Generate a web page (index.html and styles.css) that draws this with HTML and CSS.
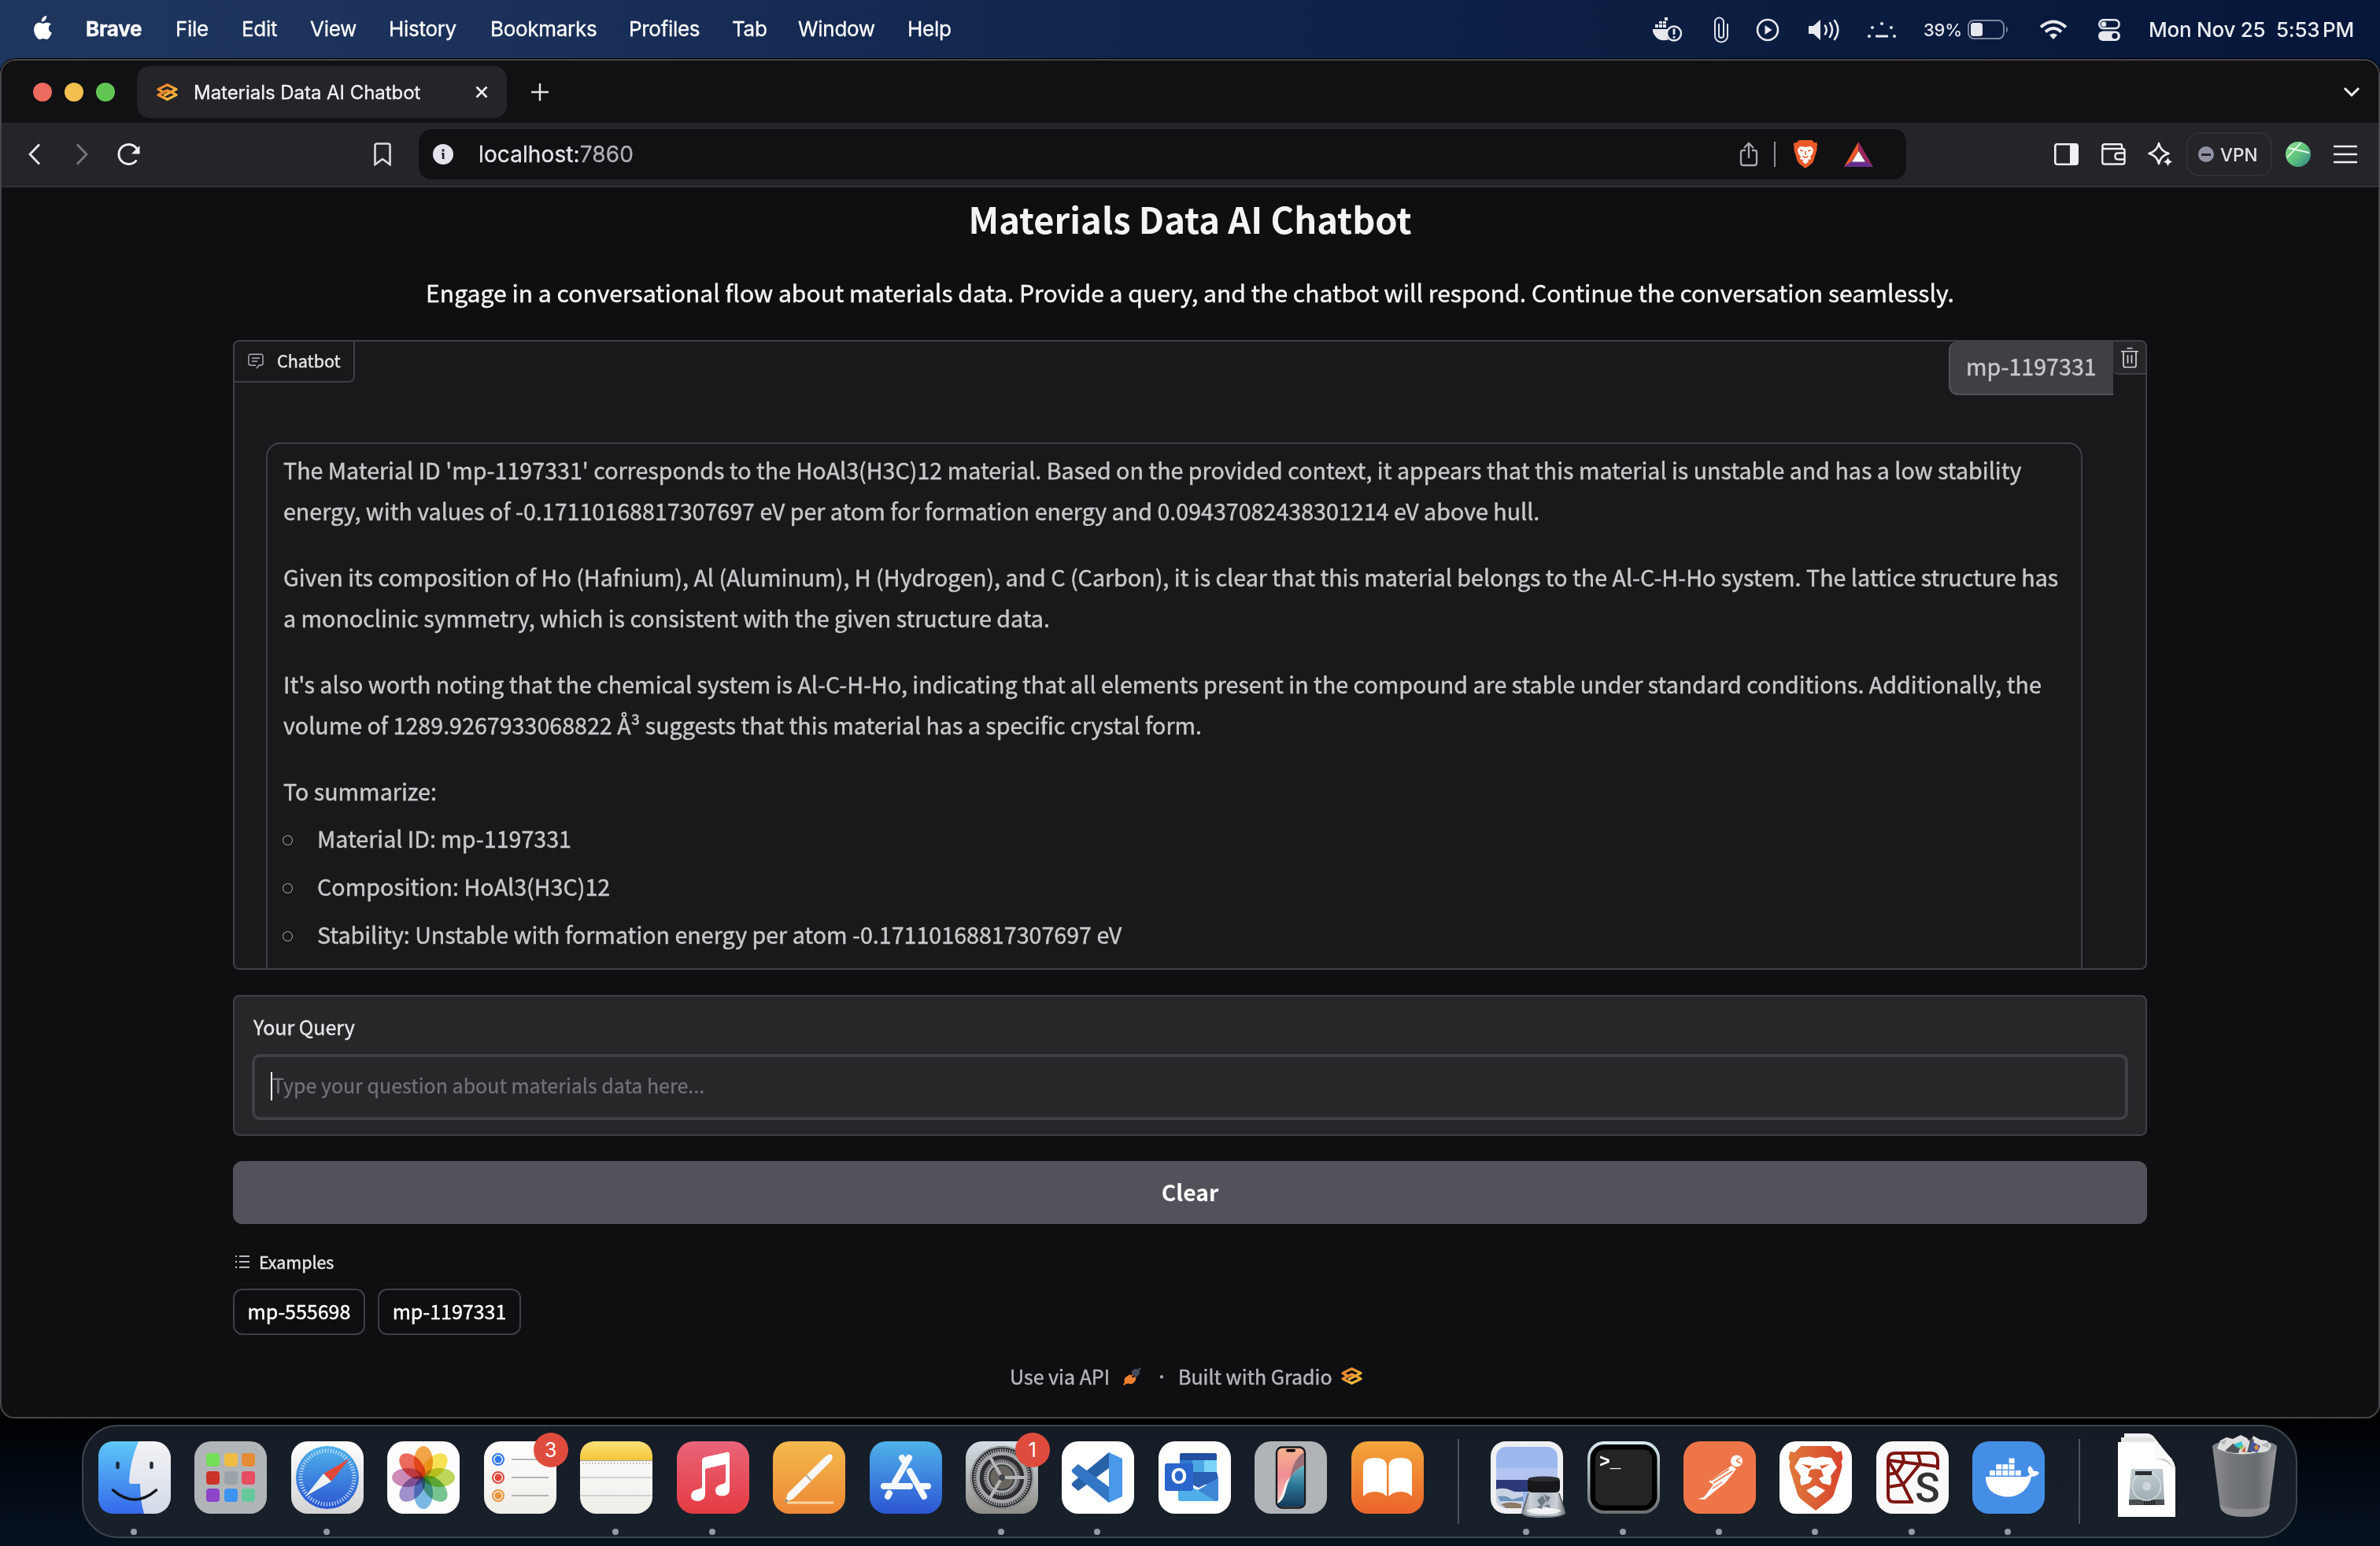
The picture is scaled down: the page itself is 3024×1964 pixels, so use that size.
FILE: index.html
```html
<!DOCTYPE html>
<html lang="en">
<head>
<meta charset="utf-8">
<title>Materials Data AI Chatbot</title>
<link rel="stylesheet" href="styles.css">
</head>
<body>
<svg width="0" height="0" class="defs" aria-hidden="true">
  <defs>
    <linearGradient id="gOrange" x1="0" y1="0" x2="1" y2="1"><stop offset="0" stop-color="#e8772e"/><stop offset=".5" stop-color="#f0a033"/><stop offset="1" stop-color="#f4cf45"/></linearGradient>
    <linearGradient id="gFinder" x1="0" y1="0" x2="0" y2="1"><stop offset="0" stop-color="#5fc8f8"/><stop offset="1" stop-color="#3568ea"/></linearGradient>
    <linearGradient id="gFace" x1="0" y1="0" x2="0" y2="1"><stop offset="0" stop-color="#f3f3f5"/><stop offset="1" stop-color="#d3dbe8"/></linearGradient>
    <linearGradient id="gWhite" x1="0" y1="0" x2="0" y2="1"><stop offset="0" stop-color="#ffffff"/><stop offset="1" stop-color="#d3d3d3"/></linearGradient>
    <linearGradient id="gBlue" x1="0" y1="0" x2="0" y2="1"><stop offset="0" stop-color="#4fb3ea"/><stop offset="1" stop-color="#2c55d2"/></linearGradient>
    <linearGradient id="gMusic" x1="0" y1="0" x2="0" y2="1"><stop offset="0" stop-color="#ea6478"/><stop offset="1" stop-color="#e43b42"/></linearGradient>
    <linearGradient id="gPages" x1="0" y1="0" x2="0" y2="1"><stop offset="0" stop-color="#f4b94c"/><stop offset="1" stop-color="#ec8836"/></linearGradient>
    <linearGradient id="gBooks" x1="0" y1="0" x2="0" y2="1"><stop offset="0" stop-color="#f2a63a"/><stop offset="1" stop-color="#ec632b"/></linearGradient>
    <linearGradient id="gSet" x1="0" y1="0" x2="0" y2="1"><stop offset="0" stop-color="#d5dfe6"/><stop offset="1" stop-color="#8f8d88"/></linearGradient>
    <linearGradient id="gNote" x1="0" y1="0" x2="0" y2="1"><stop offset="0" stop-color="#fbe27a"/><stop offset="1" stop-color="#f6c538"/></linearGradient>
    <linearGradient id="gPaper" x1="0" y1="0" x2="0" y2="1"><stop offset="0" stop-color="#ffffff"/><stop offset="1" stop-color="#efede8"/></linearGradient>
    <linearGradient id="gLion" x1="0" y1="0" x2="1" y2="0"><stop offset="0" stop-color="#df7a3c"/><stop offset="1" stop-color="#d8432c"/></linearGradient>
    <linearGradient id="gPhone" x1="0" y1="0" x2="0" y2="1"><stop offset="0" stop-color="#f6b48f"/><stop offset=".45" stop-color="#f08e93"/><stop offset="1" stop-color="#f7c9c4"/></linearGradient>
    <linearGradient id="gSea" x1="0" y1="0" x2="0" y2="1"><stop offset="0" stop-color="#6cb8c4"/><stop offset=".5" stop-color="#2b7594"/><stop offset="1" stop-color="#123a5c"/></linearGradient>
    <linearGradient id="gBin" x1="0" y1="0" x2="1" y2="0"><stop offset="0" stop-color="#8b8d90"/><stop offset=".3" stop-color="#74777a"/><stop offset=".7" stop-color="#6a6d70"/><stop offset="1" stop-color="#9a9c9e"/></linearGradient>
    <linearGradient id="gDisk" x1="0" y1="0" x2="0" y2="1"><stop offset="0" stop-color="#c3ced2"/><stop offset="1" stop-color="#9aa8ad"/></linearGradient>
    <linearGradient id="gTerm" x1="0" y1="0" x2="0" y2="1"><stop offset="0" stop-color="#d8eaf2"/><stop offset="1" stop-color="#6b6d70"/></linearGradient>
    <linearGradient id="gGreen" x1="0" y1="0" x2="1" y2="1"><stop offset="0" stop-color="#9be29a"/><stop offset=".5" stop-color="#5fc47a"/><stop offset="1" stop-color="#2f8090"/></linearGradient>
    <linearGradient id="gJar" x1="0" y1="0" x2="1" y2="0"><stop offset="0" stop-color="#7d8288"/><stop offset=".2" stop-color="#ccd2d8"/><stop offset=".5" stop-color="#a9b4c0"/><stop offset=".8" stop-color="#cdd2d7"/><stop offset="1" stop-color="#6c7075"/></linearGradient>
    <symbol id="gradio" viewBox="0 0 27 22"><g fill="none" stroke="url(#gOrange)" stroke-width="3.2" stroke-linejoin="round"><path d="M9 11.5 2 7.4 13.500 1.700 25 7.400 9 15.5"/><path d="M18 10.500 25 14.600 13.500 20.300 2 14.600 13.500 8.800 18 11"/></g></symbol>
    <symbol id="lion" viewBox="0 0 70 83"><path d="M16 0h38l8 8 6-2 2 10-2 4 1 6-2 8-8 26q-1 5-6 9L35 83 17 69q-5-4-6-9L3 34 1 26l1-6-2-4 2-9 6 1z"/></symbol>
  </defs>
</svg>

<header class="menubar">
  <nav class="menus">
    <svg class="apple" width="26" height="31" viewBox="0 0 26 31"><path fill="#fff" d="M18.200 0c.3 2-.6 3.900-1.700 5.200-1.200 1.400-3 2.400-4.800 2.300-.3-1.900.6-3.800 1.700-5C14.600 1.100 16.600.1 18.200 0zM24 10.600c-2 1.300-3.200 3-3.200 5.300 0 2.700 1.600 4.700 4 5.700-.6 1.800-1.500 3.500-2.600 5.100-1.100 1.600-2.300 3.300-4.100 3.300-1.700 0-2.300-1-4.300-1s-2.700 1-4.300 1.100c-1.800.1-3.100-1.700-4.200-3.300C2.200 22.700 1 16.300 3.400 12.200 4.500 10 6.700 8.700 9 8.700c1.800 0 3.400 1.200 4.500 1.200s3.100-1.400 5.300-1.200c2 .1 4 .8 5.200 1.900z"/></svg>
    <b>Brave</b><span>File</span><span>Edit</span><span>View</span><span>History</span><span>Bookmarks</span><span>Profiles</span><span>Tab</span><span>Window</span><span>Help</span>
  </nav>
  <div class="status">
    <svg width="40" height="32" viewBox="0 0 40 32" fill="#e6e8ee"><path d="M1 15h20a11 11 0 0 0 0 13.500Q10 31 5 25 0 19 1 15zM4 9h4v4H4zM9 9h4v4H9zM14 9h4v4h-4zM9 5h4v3H9zM14 5h4v3h-4zM16 0h4v4h-4z"/><circle cx="28" cy="20.500" r="9" fill="none" stroke="#e6e8ee" stroke-width="2.400"/><path d="M26.600 14.500h2.800v7.500h-2.800zM26.600 24h2.800v2.600h-2.800z"/></svg>
    <svg width="20" height="34" viewBox="0 0 20 34" fill="none" stroke="#dfe2e9" stroke-width="2"><path d="M18 9v16a8 7.500 0 0 1-16 0V7a5.500 5.500 0 0 1 11 0v17a3 3 0 0 1-6 0V9"/></svg>
    <svg width="30" height="30" viewBox="0 0 30 30"><circle cx="15" cy="15" r="13" fill="none" stroke="#e6e8ee" stroke-width="2.600"/><path fill="#e6e8ee" d="M11.500 9v12l9-6z"/></svg>
    <svg width="42" height="28" viewBox="0 0 42 28"><path fill="#e6e8ee" d="M1 9h6l9-8v26l-9-8H1z"/><g fill="none" stroke="#e6e8ee" stroke-width="2.600" stroke-linecap="round"><path d="M22 8.500q3.500 5.500 0 11M28 5q6 9 0 18M34 2q8.500 12 0 24"/></g></svg>
    <svg width="38" height="24" viewBox="0 0 38 24" fill="#e6e8ee"><circle cx="18" cy="4" r="2"/><circle cx="6" cy="9" r="2"/><circle cx="30" cy="9" r="2"/><circle cx="2" cy="20" r="2"/><circle cx="34" cy="20" r="2"/><path d="M10 18.500h16v3H10z"/></svg>
    <span class="pct">39%</span>
    <svg width="53" height="26" viewBox="0 0 53 26"><rect x="1" y="1" width="45" height="23" rx="7" fill="none" stroke="#7d879c" stroke-width="2"/><rect x="4" y="4" width="15" height="17" rx="3.500" fill="#e6e8ee"/><path fill="#7d879c" d="M49 8q4 4.500 0 9z"/></svg>
    <svg width="36" height="26" viewBox="0 0 36 26" fill="none" stroke="#e6e8ee" stroke-width="4"><path d="M2 9.500q16-14 32 0M8 15.500q10-9 20 0"/><path d="M13 19.500q5-4 10 0L18 25z" fill="#e6e8ee" stroke="none"/></svg>
    <svg width="28" height="28" viewBox="0 0 28 28"><rect x="1.300" y="1.300" width="25.400" height="10.800" rx="5.400" fill="none" stroke="#e6e8ee" stroke-width="2.500"/><circle cx="7" cy="6.700" r="3.300" fill="#e6e8ee"/><rect y="15.500" width="28" height="12.500" rx="6.200" fill="#e6e8ee"/><circle cx="21" cy="21.700" r="3.600" fill="#0a1b3c"/></svg>
    <span class="date">Mon Nov 25</span><span class="date time">5:53 PM</span>
  </div>
</header>

<main class="window">
  <div class="tabstrip">
    <i class="light red"></i><i class="light yellow"></i><i class="light green"></i>
    <div class="tab">
      <svg width="27" height="22"><use href="#gradio"/></svg>
      <span class="tab-title">Materials Data AI Chatbot</span>
      <svg class="tab-x" width="16" height="16" viewBox="0 0 16 16"><path d="M1.500 1.500l13 13M14.500 1.500l-13 13" stroke="#f0f0f2" stroke-width="2.600"/></svg>
    </div>
    <svg class="plus" width="22" height="22" viewBox="0 0 22 22"><path d="M11 0v22M0 11h22" stroke="#e4e4e7" stroke-width="2.400"/></svg>
    <svg class="chev" width="22" height="14" viewBox="0 0 22 14"><path d="M2 2l9 9 9-9" fill="none" stroke="#f0f0f2" stroke-width="3"/></svg>
  </div>

  <div class="toolbar">
    <svg width="16" height="28" viewBox="0 0 16 28"><path d="M14 1.500L2 14l12 12.500" fill="none" stroke="#e6e6ea" stroke-width="2.800"/></svg>
    <svg width="16" height="28" viewBox="0 0 16 28"><path d="M2 1.500L14 14 2 26.500" fill="none" stroke="#77777d" stroke-width="2.800"/></svg>
    <svg width="32" height="30" viewBox="0 0 32 30"><path d="M25.500 22.500a12.500 12.500 0 1 1 1-13.500" fill="none" stroke="#f0f0f2" stroke-width="2.900"/><path d="M29.500 4v10.500H19z" fill="#f0f0f2"/></svg>
    <svg width="24" height="30" viewBox="0 0 24 30"><path d="M2.500 28V4q0-2.500 2.500-2.500h14q2.500 0 2.500 2.500v24L12 21z" fill="none" stroke="#dcdce0" stroke-width="2.600"/></svg>
    <div class="omnibox">
      <svg width="26" height="26" viewBox="0 0 26 26"><circle cx="13" cy="13" r="13" fill="#e4e2ea"/><path d="M11.600 6.500h2.800v3h-2.800zM11 11.200h3.400V19h-2.500v-6H11z" fill="#17171b"/></svg>
      <span class="url">localhost:<em>7860</em></span>
      <svg class="share" width="24" height="32" viewBox="0 0 24 32" fill="none" stroke="#a9a9ae" stroke-width="2.300"><path d="M8 11H4.500Q2 11 2 13.500V27q0 3 3 3h14q3 0 3-3V13.500Q22 11 19.500 11H16M12 21V2M6 8l6-6 6 6"/></svg>
      <i class="sep"></i>
      <svg width="32" height="36" viewBox="0 0 32 36"><use href="#lion" fill="#ea5a2a" width="32" height="36"/><path fill="#fff" d="M6 12l3-4 5 .5 2 .5 2-.5 5-.5 3 4-1 5-3 4 1 3-5 1.500 2.500 1L16 30.500 11.500 26.500l2.500-1L9 24l1-3-3-4z"/><path d="M9 12.500l4 1.500M23 12.500L19 14M16 14v5M12.500 20.500L16 22.500l3.500-2" stroke="#ea5a2a" stroke-width="1.500" fill="none"/></svg>
      <svg class="bat" width="37" height="32" viewBox="0 0 37 32"><path fill="#f0562e" d="M18.500 0v12L9 26 0 32z"/><path fill="#99275f" d="M18.500 0v12L28 26l9 6z"/><path fill="#662f8d" d="M0 32l9-7h19l9 7z"/><path fill="#fff" d="M18.500 12L27 25.500H10z"/></svg>
    </div>
    <div class="tools">
      <svg width="31" height="28" viewBox="0 0 31 28"><rect x="1.300" y="1.300" width="28.400" height="25.400" rx="2.500" fill="none" stroke="#f0f0f2" stroke-width="2.600"/><path fill="#f0f0f2" d="M20 1h10v26H20z"/></svg>
      <svg width="31" height="28" viewBox="0 0 31 28" fill="none" stroke="#f0f0f2" stroke-width="2.400"><path d="M1.300 4.500V24q0 2.500 2.500 2.500H27q2.500 0 2.500-2.500V9.500Q29.500 7 27 7H4Q1.300 7 1.300 4.300T4 1.300h20q2 0 2 2V7M29 12.500H21q-3.500 0-3.500 4t3.500 4h8"/></svg>
      <svg width="32" height="32" viewBox="0 0 32 32"><path d="M14 2q2 10 12.500 13Q16 18 14 28 12 18 1.500 15 12 12 14 2z" fill="none" stroke="#f0f0f2" stroke-width="2.500" stroke-linejoin="round"/><path d="M25.500 19.500q1 5 6 6-5 1-6 6-1-5-6-6 5-1 6-6z" fill="#f0f0f2"/></svg>
      <div class="vpn"><i></i>VPN</div>
      <svg width="32" height="32" viewBox="0 0 32 32"><circle cx="16" cy="16" r="16" fill="url(#gGreen)"/><path d="M2 20L20 1M4 8l26 6" stroke="#e8f8ea" stroke-width="1.800" fill="none"/></svg>
      <svg width="30" height="24" viewBox="0 0 30 24"><path d="M0 2h30M0 12h30M0 22h30" stroke="#f0f0f2" stroke-width="2.600"/></svg>
    </div>
  </div>

  <section class="page">
    <h1>Materials Data AI Chatbot</h1>
    <p class="intro">Engage in a conversational flow about materials data. Provide a query, and the chatbot will respond. Continue the conversation seamlessly.</p>

    <div class="chat">
      <div class="chat-head">
        <div class="label">
          <svg width="20" height="20" viewBox="0 0 20 20" fill="none" stroke="#b4b4ba" stroke-width="1.400"><path d="M11 19l3-4h2.500Q19 15 19 12.500v-9Q19 1 16.500 1h-13Q1 1 1 3.500v9Q1 15 3.500 15H10M5 6h10M5 10h7"/></svg>
          <span>Chatbot</span>
        </div>
        <div class="user">mp-1197331</div>
        <div class="trash">
          <svg width="22" height="27" viewBox="0 0 22 27" fill="none" stroke="#d6d6da" stroke-width="1.700"><path d="M0 5.500h22M7.500 1.500h7M3 5.500V23q0 2.500 2.500 2.500h11Q19 25.500 19 23V5.500M8.500 10v10.500M13.500 10v10.500"/></svg>
        </div>
      </div>
      <div class="bot">
        <p>The Material ID 'mp-1197331' corresponds to the HoAl3(H3C)12 material. Based on the provided context, it appears that this material is unstable and has a low stability<br>energy, with values of -0.17110168817307697 eV per atom for formation energy and 0.09437082438301214 eV above hull.</p>
        <p>Given its composition of Ho (Hafnium), Al (Aluminum), H (Hydrogen), and C (Carbon), it is clear that this material belongs to the Al-C-H-Ho system. The lattice structure has<br>a monoclinic symmetry, which is consistent with the given structure data.</p>
        <p>It's also worth noting that the chemical system is Al-C-H-Ho, indicating that all elements present in the compound are stable under standard conditions. Additionally, the<br>volume of 1289.9267933068822 Å³ suggests that this material has a specific crystal form.</p>
        <p>To summarize:</p>
        <ul>
          <li>Material ID: mp-1197331</li>
          <li>Composition: HoAl3(H3C)12</li>
          <li>Stability: Unstable with formation energy per atom -0.17110168817307697 eV</li>
        </ul>
      </div>
    </div>

    <div class="query">
      <div class="query-label">Your Query</div>
      <div class="input"><i class="caret"></i><span>Type your question about materials data here...</span></div>
    </div>

    <div class="clear">Clear</div>

    <div class="examples">
      <svg width="20" height="18" viewBox="0 0 20 18" fill="#d4d4d8"><path d="M6 1h13v1.800H6zM6 8h13v1.800H6zM6 15h13v1.800H6zM1 1h2v1.800H1zM1 8h2v1.800H1zM1 15h2v1.800H1z"/></svg>
      <span>Examples</span>
    </div>
    <div class="chips"><span class="chip chip-a">mp-555698</span><span class="chip chip-b">mp-1197331</span></div>

    <footer class="footer">
      <span class="api">Use via API</span>
      <svg class="plug" width="23" height="23" viewBox="0 0 23 23"><path fill="#454b5c" d="M10 6l4-3.500q2.500-1.500 5 0L21.500 0 23 1.500 20.500 4q1.500 3-.5 5.500L16.500 13z"/><path fill="#ec7f34" d="M8.500 9l1.500 1.500L12 8.500 13 10l-2 2 1.500 1.500 2-2L16 13q1 2-.5 4L14 19q-3 3.500-7 1.500L3.500 21 1.500 23 0 21.500 2 19.500Q0 15 4 12z"/></svg>
      <span class="dot">·</span>
      <span class="built">Built with Gradio</span>
      <svg width="27" height="22"><use href="#gradio"/></svg>
    </footer>
  </section>
</main>

<div class="dock">
  <div class="app on"><svg viewBox="0 0 92 92"><rect width="92" height="92" rx="21" fill="url(#gFace)"/><path fill="url(#gFinder)" d="M21 0H51Q40 26 39 51q0 3 3 3h11q0 20 5 38H21Q0 92 0 71V21Q0 0 21 0z"/><path d="M24.500 28v5M67.500 28v5" stroke="#1d2a3a" stroke-width="4.500" stroke-linecap="round"/><path d="M18.500 62q27.500 24 55 0" fill="none" stroke="#12161c" stroke-width="3.500" stroke-linecap="round"/></svg></div>
  <div class="app"><svg viewBox="0 0 92 92"><rect width="92" height="92" rx="21" fill="#b2b5b8"/><g><rect x="15" y="15" width="17" height="17" rx="4" fill="#74de58"/><rect x="38" y="15" width="17" height="17" rx="4" fill="#efbc44"/><rect x="60" y="15" width="17" height="17" rx="4" fill="#e58b35"/><rect x="15" y="38" width="17" height="17" rx="4" fill="#cc3327"/><rect x="38" y="38" width="17" height="17" rx="4" fill="#9aa3a8"/><rect x="60" y="38" width="17" height="17" rx="4" fill="#e84e62"/><rect x="15" y="60" width="17" height="17" rx="4" fill="#8c44c8"/><rect x="38" y="60" width="17" height="17" rx="4" fill="#3d93ef"/><rect x="60" y="60" width="17" height="17" rx="4" fill="#66c99c"/></g></svg></div>
  <div class="app on"><svg viewBox="0 0 92 92"><rect width="92" height="92" rx="21" fill="url(#gWhite)"/><circle cx="46" cy="46" r="40" fill="url(#gBlue)"/><circle cx="46" cy="46" r="34" fill="none" stroke="#cfe4fa" stroke-width="5" stroke-dasharray="1.200 2.360"/><path d="M74 22L51 51 41 41z" fill="#e2483a"/><path d="M18 70L41 41 51 51z" fill="#f0f1f3"/></svg></div>
  <div class="app"><svg viewBox="0 0 92 92"><rect width="92" height="92" rx="21" fill="#fdfdfd"/><g class="petals"><ellipse cx="46" cy="26" rx="12" ry="20" fill="#f2a03c"/><ellipse cx="46" cy="26" rx="12" ry="20" fill="#f5e04a" transform="rotate(45 46 46)"/><ellipse cx="46" cy="26" rx="12" ry="20" fill="#b9d550" transform="rotate(90 46 46)"/><ellipse cx="46" cy="26" rx="12" ry="20" fill="#72c08a" transform="rotate(135 46 46)"/><ellipse cx="46" cy="26" rx="12" ry="20" fill="#74b4e2" transform="rotate(180 46 46)"/><ellipse cx="46" cy="26" rx="12" ry="20" fill="#9a8bc8" transform="rotate(225 46 46)"/><ellipse cx="46" cy="26" rx="12" ry="20" fill="#cb86b4" transform="rotate(270 46 46)"/><ellipse cx="46" cy="26" rx="12" ry="20" fill="#ec6354" transform="rotate(315 46 46)"/></g></svg></div>
  <div class="app"><svg viewBox="0 0 92 92"><rect width="92" height="92" rx="21" fill="url(#gPaper)"/><g fill="none" stroke-width="2"><circle cx="18" cy="23" r="7" stroke="#3478f0"/><circle cx="18" cy="46" r="7" stroke="#e2493c"/><circle cx="18" cy="69" r="7" stroke="#e8943a"/></g><circle cx="18" cy="23" r="4.500" fill="#3478f0"/><circle cx="18" cy="46" r="4.500" fill="#e2493c"/><circle cx="18" cy="69" r="4.500" fill="#e8943a"/><path d="M35 23h47M35 46h47M35 69h47" stroke="#b3b5b8" stroke-width="2"/></svg><b class="badge">3</b></div>
  <div class="app on"><svg viewBox="0 0 92 92"><rect width="92" height="92" rx="21" fill="url(#gPaper)"/><path d="M0 24v-3Q0 0 21 0h50q21 0 21 21v3z" fill="url(#gNote)"/><path d="M0 24.500h92" stroke="#b4ab95" stroke-width="1.500"/><path d="M3 28h86" stroke="#b9b7b2" stroke-width="2" stroke-dasharray="1.500 2.500"/><path d="M0 46h92M0 69h92" stroke="#d4d3d1" stroke-width="2"/></svg></div>
  <div class="app on"><svg viewBox="0 0 92 92"><rect width="92" height="92" rx="21" fill="url(#gMusic)"/><path fill="#fff" d="M36 20l27-6q4-1 4 3v44q0 8-9 8.500-9 0-9-7 0-6 8-8 5-1 5-4V29l-26 6v32q0 8-9 9-9 0-9-7 0-6 8-8 6-1 6-4V24q0-3 4-4z"/></svg></div>
  <div class="app"><svg viewBox="0 0 92 92"><rect width="92" height="92" rx="21" fill="url(#gPages)"/><path d="M18 78h59" stroke="#f9d5a2" stroke-width="3"/><path d="M15 78l4-12L66 20q6-5 9-3 2 4-2 9L26 73z" fill="#f7f7f7"/><path d="M42 43l7 7" stroke="#b8aa98" stroke-width="2"/><path d="M15 78l2-5 3 3z" fill="#8f8068"/></svg></div>
  <div class="app"><svg viewBox="0 0 92 92"><rect width="92" height="92" rx="21" fill="url(#gBlue)"/><g stroke="#f4f8ff" stroke-width="8" stroke-linecap="round"><path d="M18 57h33"/><path d="M66 57h8"/><path d="M50 21L32 52M25 66l-2 4"/><path d="M41 21l4 6M51 38l18 32"/></g></svg></div>
  <div class="app on"><svg viewBox="0 0 92 92"><rect width="92" height="92" rx="21" fill="url(#gSet)"/><circle cx="46" cy="46" r="40" fill="#2c2e30"/><g fill="none" stroke="#a3a6a8"><circle cx="46" cy="46" r="39" stroke-width="1.500"/><circle cx="46" cy="46" r="34" stroke-width="5" stroke-dasharray="1.500 1.470"/><circle cx="46" cy="46" r="30.500" stroke-width="4.500"/><circle cx="46" cy="46" r="21" stroke-width="4" stroke-dasharray="1.500 1"/><circle cx="46" cy="46" r="18" stroke-width="3"/></g><circle cx="46" cy="46" r="15" fill="#68665f"/><path d="M46 46h29M46 46L31.500 21M46 46L31.500 71" stroke="#b4b7b9" stroke-width="4"/><circle cx="46" cy="46" r="4" fill="#44474a"/></svg><b class="badge">1</b></div>
  <div class="app on"><svg viewBox="0 0 92 92"><rect width="92" height="92" rx="21" fill="#fff"/><path fill="#2862a6" d="M60 14v20L21 63l-8-7q-1-2 1-4z"/><path fill="#3476c6" d="M60 78V58L21 29l-8 7q-1 2 1 4z"/><path fill="#4a98ea" d="M60 14l17 8v48l-17 8z"/></svg></div>
  <div class="app"><svg viewBox="0 0 92 92"><rect width="92" height="92" rx="21" fill="#fff"/><rect x="27" y="15" width="47" height="40" rx="3" fill="#2f78d2"/><path fill="#244fa0" d="M27 24v-6q0-3 3-3h41q3 0 3 3v6z"/><path fill="#4ba6e4" d="M43 24h15v15H43z"/><path fill="#79d4f8" d="M58 24h16v15H58z"/><path fill="#2b5fb4" d="M43 39h31l2 8-25 12-8-4z"/><path fill="#52aee8" d="M25 50l25 12 26-15v26q0 3-3 3H28q-3 0-3-3z"/><path fill="#3f86d6" d="M76 47v26q0 3-3 3L50 62z"/><rect x="8" y="28" width="36" height="35" rx="3" fill="#2a66cb"/><text x="26" y="54" class="glyph-o">O</text></svg></div>
  <div class="app"><svg viewBox="0 0 92 92"><rect width="92" height="92" rx="21" fill="#b1b4b7"/><rect x="28" y="7.500" width="36" height="77" rx="7" fill="url(#gPhone)" stroke="#17191c" stroke-width="2.400"/><path d="M63 30v48q0 5-5 5H34q-5 0-5-5 8-8 13-24t21-24z" fill="url(#gSea)"/><path d="M63 14q-14 8-18 34 5-12 18-18z" fill="#9a6f78"/><path d="M29 77q6-8 8-17 3-11 8-14-4 10-6 19-3 11-10 14z" fill="#f6eeea"/><rect x="40" y="10" width="12" height="3.500" rx="1.700" fill="#000"/></svg></div>
  <div class="app"><svg viewBox="0 0 92 92"><rect width="92" height="92" rx="21" fill="url(#gBooks)"/><path fill="#fff" d="M15 32q0-11 15-11t15 11v38q-5-6-15-6t-15 6zM47.500 32q0-11 15-11t14.500 11v38q-5-6-14.500-6t-15 6z"/></svg></div>
  <i class="rule"></i>
  <div class="app on"><svg viewBox="0 0 92 92"><rect width="92" height="92" rx="19" fill="#f0f0f2"/><rect x="7" y="7" width="78" height="78" rx="13" fill="#9db8ee"/><path fill="#b4c4f0" d="M7 34h78v15H7z"/><path fill="#2d3a78" d="M7 49h78v15H7z"/><path fill="#c8d4e4" d="M7 61q10-3 18 1t16 2v20H20Q7 85 7 72z"/><path fill="#6f93bb" d="M9 70q12-2 18 4l14-4v6H12z"/><path fill="#8e7a66" d="M13 80q12-5 26 0v5H20z"/><path d="M49 62h37l9 28q-2 7-27 7-29 0-29-7z" fill="url(#gJar)"/><path d="M48 66l-7 22M87 66l7 22" stroke="#5c6065" stroke-width="1.500"/><path d="M45 88q22-8 45 0-8 5-22 5t-23-5z" fill="#f2f3f4"/><path d="M40 91q6 5 28 5t27-5" fill="none" stroke="#73777b" stroke-width="1.500"/><path d="M59 75l7-6 4 7-5 7zM68 68l8 3-4 7zM58 84l6-3 2 5zM68 82l6-2 2 5z" fill="#6f7983"/><rect x="47" y="46" width="41" height="19" rx="5" fill="#16181a"/><ellipse cx="67.500" cy="48" rx="20" ry="3.500" fill="#2c2e31"/></svg></div>
  <div class="app on"><svg viewBox="0 0 92 92"><rect width="92" height="92" rx="21" fill="url(#gTerm)"/><rect x="3.500" y="4" width="85" height="84" rx="18" fill="#000"/><rect x="10" y="10.500" width="72" height="71" rx="11" fill="#242424"/><text x="15" y="33" class="prompt">&gt;_</text></svg></div>
  <div class="app on"><svg viewBox="0 0 92 92"><rect width="92" height="92" rx="21" fill="#ed7548"/><circle cx="67.500" cy="25" r="7.500" fill="#fff"/><path d="M67 25l5-4M67 25l6 3" stroke="#ed7548" stroke-width="1.500"/><path fill="#fff" d="M61 31l6 4-6 8-8 10-9 7-17 14-9-1 8-2 12-16-6-4 17-12z"/><path d="M35 50L58 35M38 53l24-15M37 60l12-8" stroke="#ed7548" stroke-width="1.500"/></svg></div>
  <div class="app on"><svg viewBox="0 0 92 92"><rect width="92" height="92" rx="21" fill="#fff"/><use href="#lion" x="11" y="6" width="70" height="82" fill="url(#gLion)"/><path fill="#fff" d="M26 21l12-1.500 8 2 8-2L66 21l7 12-8 11q2 8-1 12l-10-3 -4-6 6-3-3-8-7-1-7 1-3 8 6 3-4 6-10 3q-3-4-1-12l-8-11zM34 62.500L46 56l12 6.500L46 72z"/><path d="M28 29l13 2-3 4zM64 29l-13 2 3 4z" fill="#dd5c33"/></svg></div>
  <div class="app on"><svg viewBox="0 0 92 92"><rect width="92" height="92" rx="21" fill="#f9f9f9"/><g fill="none" stroke="#7e1512" stroke-width="4"><path d="M78 36V24q0-9-9-9H24q-9 0-9 9v45q0 8 8 8h24"/><path d="M15 24l63 8M33 15l2 10M53 15l3 13M56 28L34 55M15 24l19 31 11 22M15 42l11-2M26 40l9-14M15 58l19-3"/></g><text x="65" y="77" class="glyph-s">S</text></svg></div>
  <div class="app on"><svg viewBox="0 0 92 92"><rect width="92" height="92" rx="21" fill="#448ee6"/><path fill="#fff" d="M17 45h52q3-1 4-3-5-6 0-11 4 3 5 7 4-1 7 2-3 5-10 5-4 18-20 24-10 3-20 0Q17 64 17 45z"/><path fill="#fff" d="M22 37h7v6.500h-7zM30.200 37h7v6.500h-7zM38.400 37h7v6.500h-7zM46.600 37h7v6.500h-7zM54.800 37h7v6.500h-7zM30.200 29.200h7v6.500h-7zM38.400 29.200h7v6.500h-7zM46.600 29.200h7v6.500h-7zM46.600 21.500h7V28h-7z"/></svg></div>
  <i class="rule rule-b"></i>
  <svg class="file" width="74" height="106" viewBox="0 0 74 106"><path d="M8 0h30q6 1 9 6l22 28v50H8z" fill="#f0f0f0"/><path d="M4 5h34q7 0 10 5l21 26v50H4z" fill="#e2e2e2"/><path d="M0 11h46q8 16 22 21 5 7 5 14v60H0z" fill="#fff"/><path d="M47 8l22 25v9Q60 32 47 33z" fill="#fafafa"/><path d="M47 33q14-1 24 12-4-10-12-13z" fill="#cfcfcf"/><path d="M17 45h40l2 40v6H14v-6z" fill="url(#gDisk)"/><path d="M14 84h45v7H14z" fill="#4c4f52"/><path d="M34 85v6M37 85v6M40 85v6M43 85v6M46 85v6" stroke="#15171a" stroke-width="1.500"/><circle cx="36.500" cy="67" r="18" fill="none" stroke="#d6dee1" stroke-width="1.500"/><circle cx="36.500" cy="67" r="5.500" fill="#cdd6da"/><path d="M22 48h21v5H22z" fill="#2a2d30"/></svg>
  <svg class="bin" width="82" height="104" viewBox="0 0 82 104"><path d="M0 14L10 92q4 12 31 12t31-12l10-78z" fill="url(#gBin)"/><ellipse cx="41" cy="15" rx="41" ry="9" fill="#808488"/><path d="M6 17L10 7l8-4 8 2 10-5 8 4 4 6 4-9 9 5 8 1 6 6-3 6q-6 4-14 3-26 6-48-3z" fill="#dedede"/><path d="M16 20l10-9 10 3-3 9q-10 0-17-3zM44 22l5-18 4 2-3 16z" fill="#4f5358"/><path d="M10 9l9-4-4 8zM62 13l9-4 1 8z" fill="#b4b6b8"/><path d="M27 12l10-4 2 6-6 3z" fill="#35c4d2"/><path d="M33 15l7-2-3 6z" fill="#7fc24a"/><path d="M50 8l11 6-4 8-10-2z" fill="#46569c"/><path d="M53 15l4-3 2 5-4 3z" fill="#e08b3a"/><path d="M37 21l5-7v8z" fill="#d45a3a"/><path d="M9 86q4 8 32 8t32-8l-1 6q-4 12-31 12T10 92z" fill="#a0a2a4" opacity=".55"/></svg>
</div>
</body>
</html>
```

FILE: styles.css
```css
* { box-sizing: border-box; }
body {
  margin: 0;
  width: 3024px;
  height: 1964px;
  overflow: hidden;
  display: flex;
  flex-direction: column;
  background: linear-gradient(90deg, #1f365f 0, #1a3059 700px, #12264e 1300px, #0c1e42 2100px, #05163a 3024px) top / 100% 120px no-repeat, linear-gradient(#000 1800px, #020810 1860px, #07121f 1950px);
  color: #fff;
  font-family: "Inter", sans-serif;
}
svg { display: block; flex: none; }
.defs { position: absolute; }

/* menu bar */
.menubar { height: 75px; flex: none; display: flex; justify-content: space-between; font-size: 26px; line-height: 74px; letter-spacing: -.3px; white-space: nowrap; }
.menus { display: grid; grid-template-columns: 68px 114px 84px 87px 100px 129px 176px 131px 84px 139px auto; padding-left: 41px; -webkit-text-stroke: .3px currentColor; }
.apple { margin-top: 20px; }
.menus b { font-weight: 700; }
.status { width: 925px; display: grid; align-items: center; grid-template-columns: 78px 54px 66px 76px 71px 56px 91px 75px 64px 162px auto; color: #e6e8ee; }
.pct { font-size: 22px; letter-spacing: -.2px; font-weight: 500; }
.date { font-weight: 500; color: #eceef3; letter-spacing: -.25px; }
.time { word-spacing: -3px; }

/* browser window */
.window { height: 1727px; flex: none; border: 2px solid #46464a; border-radius: 20px 20px 18px 18px; box-shadow: 0 0 0 1px #000; overflow: hidden; display: flex; flex-direction: column; background: #0f0f11; }
.tabstrip { height: 79px; flex: none; display: flex; align-items: center; padding: 1px 23px 0 40px; background: #111113; }
.light { width: 24px; height: 24px; border-radius: 50%; margin-right: 16px; }
.red { background: #ec6a5e; }
.yellow { background: #f4bf4f; }
.green { background: #61c554; }
.tab { width: 470px; height: 66px; margin-left: 12px; border-radius: 16px; background: #252429; display: flex; align-items: center; padding: 0 24px 0 25px; }
.tab-title { margin-left: 20px; font-size: 24px; letter-spacing: -.04px; color: #f2f2f4; white-space: nowrap; -webkit-text-stroke: .3px currentColor; }
.tab-x { margin-left: auto; }
.plus { margin-left: 31px; }
.chev { margin-left: auto; margin-right: 0; }
.toolbar { height: 82px; flex: none; display: flex; align-items: center; background: #252429; border-bottom: 2px solid #333336; padding-left: 34px; }
.toolbar > svg:nth-child(2) { margin-left: 44px; }
.toolbar > svg:nth-child(3) { margin-left: 36px; }
.toolbar > svg:nth-child(4) { margin-left: 294px; }
.omnibox { width: 1890px; height: 64px; margin-left: 34px; border-radius: 16px; background: #111113; display: flex; align-items: center; padding: 0 42px 0 18px; }
.url { margin-left: 32px; font-size: 28px; letter-spacing: .1px; color: #e6e6ea; -webkit-text-stroke: .3px currentColor; }
.url em { font-style: normal; color: #aeaeb4; }
.share { margin-left: auto; }
.sep { width: 2px; height: 32px; margin: 0 22px 0 20px; background: #8f8f94; }
.bat { margin-left: 33px; }
.tools { display: grid; grid-template-columns: 60px 59px 49px 126px 61px 30px; align-items: center; margin-left: 188px; }
.vpn { width: 109px; height: 56px; border: 2px solid #313136; border-radius: 16px; display: flex; align-items: center; padding-left: 13px; gap: 8px; font-size: 22.500px; font-weight: 500; color: #e4e4e8; }
.vpn i { width: 20px; height: 20px; border-radius: 50%; background: linear-gradient(#252429, #252429) center / 12px 3px no-repeat #8f91a3; }

/* chat page */
.page { flex: 1; padding: 10px 294px 0; font-family: "Noto Sans CJK SC", sans-serif; white-space: nowrap; -webkit-text-stroke: .45px currentColor; }
h1 { margin: 0; text-align: center; font-size: 45.300px; line-height: 59px; height: 60px; font-weight: 700; color: #f4f4f5; -webkit-text-stroke: 0; }
.intro { margin: 38px 0 0; text-align: center; font-size: 30.100px; line-height: 51px; height: 50px; color: #f4f4f5; }
.chat { height: 800px; margin-top: 36px; border: 2px solid #3f3f46; border-radius: 8px; background: #19191b; overflow: hidden; color: #c8c8cb; font-size: 28.650px; }
.chat-head { height: 68px; display: flex; align-items: flex-start; }
.label { width: 153px; height: 52px; border: solid #3f3f46; border-width: 0 2px 2px 0; border-radius: 0 0 8px 0; display: flex; align-items: center; padding-left: 17px; gap: 17px; font-size: 21.500px; color: #e4e4e7; }
.label span { margin-top: -3px; }
.user { margin-left: auto; height: 68px; width: 209px; padding-left: 20px; background: #3f3f46; border: solid #53535b; border-width: 0 0 2px 2px; border-radius: 10px 0 0 12px; line-height: 62px; }
.trash { width: 41px; height: 42px; border: solid #3f3f46; border-width: 0 0 2px; background: #27272a; border-radius: 0 0 0 6px; display: flex; align-items: center; justify-content: center; }
.bot { margin: 60px 80px 0 40px; height: 800px; border: 2px solid #3f3f46; border-radius: 18px; padding: 7px 20px; line-height: 52px; }
.bot p { margin: 0 0 32px; }
.bot ul { margin: -24px 0 0; padding: 0; list-style: none; }
.bot li { position: relative; margin-bottom: 9px; padding-left: 43px; }
.bot li::before { content: ""; position: absolute; left: -1px; top: 22px; width: 11px; height: 11px; border: 1.500px solid #b4b4b8; border-radius: 50%; }
.query { height: 179px; margin-top: 32px; border: 2px solid #3f3f46; border-radius: 8px; background: #27272a; padding: 20px 22px 0; font-size: 25px; }
.query-label { height: 53px; line-height: 36px; padding-left: 2px; color: #e4e4e7; }
.input { height: 84px; border: 4px solid #3f3f46; border-radius: 10px; display: flex; align-items: center; padding-left: 20px; color: #71717a; line-height: 36px; -webkit-text-stroke: .3px currentColor; }
.input span { margin-top: -6px; }
.caret { width: 2px; height: 36px; margin: -2px 0 0; background: #fff; }
.clear { height: 80px; margin-top: 32px; border-radius: 12px; background: #52525b; text-align: center; font-size: 28.300px; line-height: 78px; font-weight: 700; -webkit-text-stroke: 0; }
.examples { height: 32px; margin-top: 32px; display: flex; align-items: center; padding-left: 2px; gap: 11px; font-size: 21.400px; line-height: 32px; color: #e4e4e7; }
.chips { display: flex; gap: 16px; margin-top: 18px; }
.chip { height: 59px; border: 2px solid #3f3f46; border-radius: 12px; text-align: center; font-size: 25px; line-height: 53px; }
.chip-a { width: 168px; }
.chip-b { width: 182px; }
.footer { height: 40px; margin-top: 32px; padding-left: 987px; display: flex; align-items: center; font-size: 25px; line-height: 40px; color: #b4b4b9; }
.api { width: 144px; }
.dot { width: 8px; text-align: center; margin: 0 17px 0 22px; font-family: "Noto Sans", sans-serif; font-size: 28px; }
.built { width: 207px; }

/* dock */
.dock { width: 2815px; height: 144px; flex: none; margin: 8px 0 0 104px; border: 2px solid #3c444c; border-radius: 46px; background: linear-gradient(#161c26, #171f2a 60%, #182029); display: flex; padding: 19px 0 0 19px; gap: 30.450px; }
.app { position: relative; width: 92px; height: 92px; flex: none; }
.app svg { width: 92px; height: 92px; overflow: visible; }
.on::after { content: ""; position: absolute; left: 41px; top: 111px; width: 8px; height: 8px; border-radius: 50%; background: #929ba8; }
.badge { position: absolute; left: 63px; top: -11px; width: 44px; height: 44px; border-radius: 50%; background: #df4c3e; text-align: center; font-size: 25px; line-height: 44px; font-weight: 400; }
.rule { width: 2px; height: 108px; margin: -3px 10px 0 12.600px; background: #4a525c; flex: none; }
.rule-b { margin: -3px 18px 0 12px; }
.file { margin-top: -10px; }
.bin { margin: -8px 0 0 15px; }
.petals { isolation: isolate; }
.petals ellipse { mix-blend-mode: multiply; opacity: .95; }
.glyph-o { font: 700 27px "Inter", sans-serif; fill: #fff; text-anchor: middle; }
.glyph-s { font: 500 52px "Roboto", sans-serif; fill: #333; text-anchor: middle; }
.prompt { font: 700 23px "Liberation Mono", monospace; fill: #fff; }
```
